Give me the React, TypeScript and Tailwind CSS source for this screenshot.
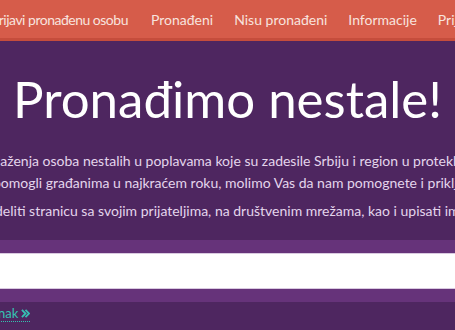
import React from 'react';

const navItems = ['Prijavi pronađenu osobu', 'Pronađeni', 'Nisu pronađeni', 'Informacije', 'Prijave'];

const App: React.FC = () => {
  return (
    <div className="w-[455px] h-[330px] overflow-hidden bg-[#4e2660]" style={{ fontFamily: 'Lato, "Open Sans", sans-serif' }}>
      {/* nav */}
      <div className="h-[41px] bg-[#d65c4a] border-b-[3px] border-[#c54d3c] overflow-hidden">
        <div className="flex items-center h-[38px] gap-[21px] ml-[-9px] whitespace-nowrap text-[14px] text-[#f8e3de]">
          {navItems.map((item, i) => (
            <span key={item} className={i === 0 ? 'mr-[2px] tracking-[-0.5px]' : ''}>
              {item}
            </span>
          ))}
        </div>
      </div>

      {/* hero */}
      <div className="pt-[30px]">
        <h1 className="text-center text-[51px] leading-[56px] text-white whitespace-nowrap">Pronađimo nestale!</h1>
        <div className="mt-[23px] text-[14px] leading-[22px] text-[#e4d5ec] whitespace-nowrap overflow-hidden">
          <p className="ml-[-3px]">laženja osoba nestalih u poplavama koje su zadesile Srbiju i region u proteklim danima</p>
          <p className="ml-[-7px]">pomogli građanima u najkraćem roku, molimo Vas da nam pomognete i priključite se</p>
          <p className="ml-[-5px] mt-[6px]">deliti stranicu sa svojim prijateljima, na društvenim mrežama, kao i upisati imena osoba</p>
        </div>
      </div>

      {/* search banner */}
      <div className="mt-[18px] bg-[#66337a] py-[13px]">
        <div className="h-[36px] bg-white border-y border-[#d9c9e0]"></div>
      </div>

      {/* link */}
      <div className="flex pt-[4px]">
        <a className="flex items-center gap-[3px] ml-[-2px] text-[13px] text-[#35c2b2] border-b border-dotted border-[#35c2b2] leading-[15px]">
          <span>nak</span>
          <svg width="9" height="9" viewBox="0 0 10 10" fill="none" stroke="currentColor" strokeWidth="2">
            <path d="M1 1 L5 5 L1 9" />
            <path d="M5 1 L9 5 L5 9" />
          </svg>
        </a>
      </div>
    </div>
  );
};

export default App;
